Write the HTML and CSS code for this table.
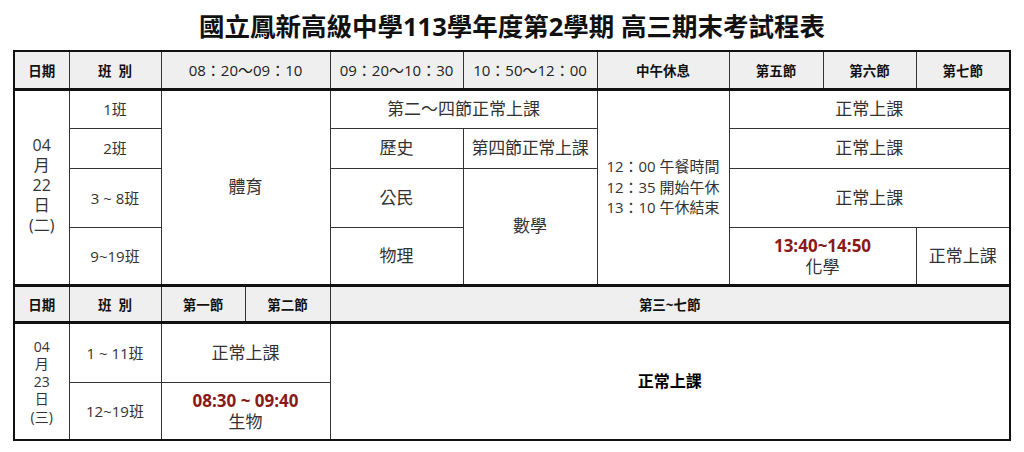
FILE: index.html
```html
<!DOCTYPE html>
<html lang="zh-Hant">
<head>
<meta charset="utf-8">
<title>高三期末考試程表</title>
<link rel="stylesheet" href="styles.css">
</head>
<body>
<h1 class="title">國立鳳新高級中學113學年度第2學期 高三期末考試程表</h1>
<table class="sched">
  <colgroup>
    <col class="c-date"><col class="c-cls"><col class="c-p1"><col class="c-p2">
    <col class="c-t2"><col class="c-t3"><col class="c-lunch">
    <col class="c-p5"><col class="c-p6"><col class="c-p7">
  </colgroup>
  <tr class="head h1">
    <th class="hb">日期</th>
    <th class="hb">班&nbsp;&nbsp;別</th>
    <th colspan="2" class="ht">08：20～09：10</th>
    <th class="ht">09：20～10：30</th>
    <th class="ht">10：50～12：00</th>
    <th class="hb">中午休息</th>
    <th class="hb">第五節</th>
    <th class="hb">第六節</th>
    <th class="hb">第七節</th>
  </tr>
  <tr class="r1">
    <td rowspan="4" class="date d1">04<br>月<br>22<br>日<br>(二)</td>
    <td class="cls">1班</td>
    <td rowspan="4" colspan="2">體育</td>
    <td colspan="2">第二～四節正常上課</td>
    <td rowspan="4" class="lunch">12：00 午餐時間<br>12：35 開始午休<br>13：10 午休結束</td>
    <td colspan="3">正常上課</td>
  </tr>
  <tr class="r2">
    <td class="cls">2班</td>
    <td>歷史</td>
    <td class="tight">第四節正常上課</td>
    <td colspan="3">正常上課</td>
  </tr>
  <tr class="r3">
    <td class="cls">3 ~ 8班</td>
    <td>公民</td>
    <td rowspan="2">數學</td>
    <td colspan="3">正常上課</td>
  </tr>
  <tr class="r4">
    <td class="cls">9~19班</td>
    <td>物理</td>
    <td colspan="2" class="exam"><span class="red">13:40~14:50</span><br>化學</td>
    <td>正常上課</td>
  </tr>
  <tr class="head h2">
    <th class="hb">日期</th>
    <th class="hb">班&nbsp;&nbsp;別</th>
    <th class="hb">第一節</th>
    <th class="hb">第二節</th>
    <th colspan="6" class="hb">第三~七節</th>
  </tr>
  <tr class="r5">
    <td rowspan="2" class="date d2">04<br>月<br>23<br>日<br>(三)</td>
    <td class="cls">1 ~ 11班</td>
    <td colspan="2">正常上課</td>
    <td colspan="6" rowspan="2" class="big">正常上課</td>
  </tr>
  <tr class="r6">
    <td class="cls">12~19班</td>
    <td colspan="2" class="exam"><span class="red">08:30 ~ 09:40</span><br>生物</td>
  </tr>
</table>
</body>
</html>
```

FILE: styles.css
```css
html, body {
  margin: 0;
  padding: 0;
  background: #ffffff;
}

body {
  font-family: "Open Sans", "Noto Sans CJK TC", sans-serif;
  color: #333333;
}

.title {
  margin: 0;
  height: 50px;
  display: flex;
  align-items: center;
  justify-content: center;
  font-family: "Open Sans", "Noto Sans CJK TC", sans-serif;
  font-size: 25.5px;
  font-weight: 700;
  color: #111111;
  padding-bottom: 2px;
  box-sizing: border-box;
}

.sched {
  margin-left: 13px;
  width: 996px;
  table-layout: fixed;
  border-collapse: collapse;
  border: 2px solid #111111;
}

.c-date { width: 55px; }
.c-cls { width: 92px; }
.c-p1 { width: 84px; }
.c-p2 { width: 85px; }
.c-t2 { width: 133px; }
.c-t3 { width: 134px; }
.c-lunch { width: 132px; }
.c-p5 { width: 94px; }
.c-p6 { width: 93px; }
.c-p7 { width: 94px; }

.sched th,
.sched td {
  border: 1px solid #333333;
  padding: 0;
  text-align: center;
  vertical-align: middle;
  white-space: nowrap;
  overflow: hidden;
}

.sched td {
  font-size: 17px;
  line-height: 22px;
  color: #333333;
}

.head th {
  background: #efefef;
  color: #111111;
}

.head .hb {
  font-size: 13.5px;
  font-weight: 700;
}

.head .ht {
  font-size: 15px;
  font-weight: 400;
  color: #222222;
}

.h1 { height: 38px; }
.h1 th { border-bottom: 3px solid #111111; }
.h2 { height: 37px; }
.h2 th { border-top: 3px solid #111111; border-bottom: 3px solid #111111; }

.r1 { height: 39px; }
.r2 { height: 40px; }
.r3 { height: 59px; }
.r4 { height: 58px; }
.r5 { height: 60px; }
.r6 { height: 58px; }

.sched td.cls {
  font-size: 15px;
}

.sched td.date {
  font-size: 16px;
}

.sched td.d1 { line-height: 20px; padding-bottom: 4px; }
.sched td.d2 { font-size: 14px; line-height: 17.5px; }

.sched td.lunch {
  font-size: 15px;
  line-height: 20.5px;
}

.sched td.tight {
  letter-spacing: -0.3px;
}

.sched td.exam {
  line-height: 21px;
}

.red {
  color: #8a1a1a;
  font-weight: 700;
  font-size: 17px;
}

.sched td.big {
  color: #000000;
  font-weight: 700;
  font-size: 16px;
}
```
